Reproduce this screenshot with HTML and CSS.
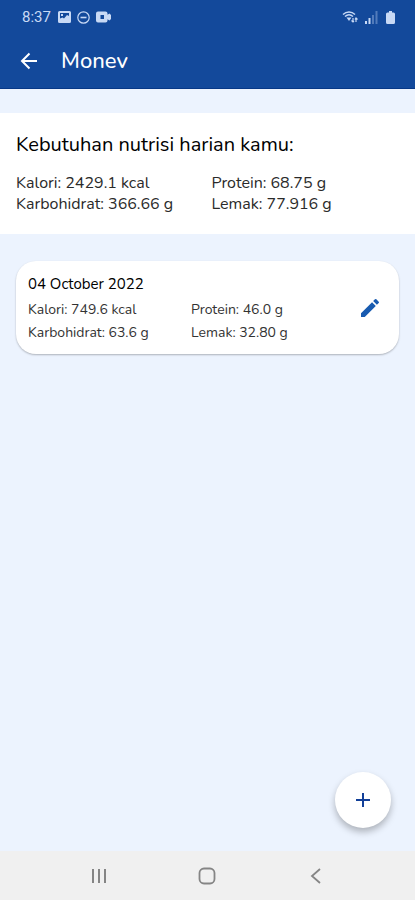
FILE: index.html
```html
<!DOCTYPE html>
<html lang="id">
<head>
<meta charset="utf-8">
<meta name="viewport" content="width=device-width, initial-scale=1">
<title>Monev</title>
<link rel="stylesheet" href="styles.css">
</head>
<body>
<header class="top">
  <div class="status">
    <time class="clock">8:37</time>
    <svg width="13" height="13" viewBox="0 0 13 13" aria-hidden="true"><path fill="currentColor" fill-rule="evenodd" d="M1.500 0h10A1.500 1.500 0 0 1 13 1.500v9a1.500 1.500 0 0 1-1.500 1.500h-10A1.500 1.500 0 0 1 0 10.500v-9A1.500 1.500 0 0 1 1.500 0zM2 2v8h9V2zM3 3h2v2H3zM2 10V7.500l2.500-1L6 7.500 9 4l2 1v5z"/></svg>
    <svg width="13" height="13" viewBox="0 0 13 13" fill="none" stroke="currentColor" aria-hidden="true"><circle cx="6.500" cy="6.500" r="5.700" stroke-width="1.200"/><path d="M3.500 6.500h6" stroke-width="1.600"/></svg>
    <svg width="16" height="12" viewBox="0 0 16 12" aria-hidden="true"><path fill="currentColor" fill-rule="evenodd" d="M2 .5h7.500a2 2 0 0 1 2 2v1.300L13.500 2.500 15 4v4l-1.500 1.500-2-1.300v1.300a2 2 0 0 1-2 2H2a2 2 0 0 1-2-2v-7a2 2 0 0 1 2-2zM4.500 4v4H8V4z"/></svg>
    <span class="spacer"></span>
    <svg width="17" height="14" viewBox="0 0 17 14" fill="none" stroke="currentColor" aria-hidden="true"><path stroke-width="1.500" d="M1 4.500C4.500 1.200 9.500 1.200 13 4.500M3 6.500c2.500-2.200 5.500-2.200 8 0"/><path fill="currentColor" stroke="none" d="M4.500 7.600h5L7 11z"/><path stroke-width="1.200" d="M11 8v4M9.500 10.500L11 12l1-1M14 12V8M13 9.500L14 8l1.500 1.500"/></svg>
    <svg width="13" height="13" viewBox="0 0 13 13" fill="currentColor" aria-hidden="true"><path d="M0 10h2v3H0zM3.500 7h2v6h-2z"/><path opacity=".35" d="M7 4h2v9H7zM10.500 0h2v13h-2z"/></svg>
    <svg class="battery" width="9" height="13" viewBox="0 0 9 13" fill="currentColor" aria-hidden="true"><path d="M3 0h3v1.500h1.500A1.500 1.500 0 0 1 9 3v8.500A1.500 1.500 0 0 1 7.500 13h-6A1.500 1.500 0 0 1 0 11.500V3a1.500 1.500 0 0 1 1.500-1.500H3z"/></svg>
  </div>
  <div class="appbar">
    <button class="icon-btn" type="button" aria-label="Kembali"><svg width="24" height="24" viewBox="0 0 24 24"><path fill="none" stroke="currentColor" stroke-width="2" d="M20 12H5.500M12.500 4.500L5 12l7.500 7.500"/></svg></button>
    <h1>Monev</h1>
  </div>
</header>
<main>
  <section class="needs">
    <h2>Kebutuhan nutrisi harian kamu:</h2>
    <div class="facts">
      <span>Kalori: 2429.1 kcal</span><span>Protein: 68.75 g</span>
      <span>Karbohidrat: 366.66 g</span><span>Lemak: 77.916 g</span>
    </div>
  </section>
  <article class="card">
    <div class="entry">
      <h3>04 October 2022</h3>
      <div class="facts">
        <span>Kalori: 749.6 kcal</span><span>Protein: 46.0 g</span>
        <span>Karbohidrat: 63.6 g</span><span>Lemak: 32.80 g</span>
      </div>
    </div>
    <button class="icon-btn edit" type="button" aria-label="Ubah"><svg width="24" height="24" viewBox="0 0 24 24" fill="currentColor"><path d="M3 17.250V21h3.750L17.810 9.940l-3.750-3.750L3 17.250zM20.710 7.040a1 1 0 0 0 0-1.410l-2.340-2.340a1 1 0 0 0-1.410 0l-1.830 1.830 3.750 3.750 1.830-1.830z"/></svg></button>
  </article>
</main>
<button class="fab" type="button" aria-label="Tambah"><svg width="24" height="24" viewBox="0 0 24 24"><path fill="none" stroke="currentColor" stroke-width="2" d="M12 5v14M5 12h14"/></svg></button>
<nav class="nav">
  <button type="button" aria-label="Terbaru"><svg width="20" height="20" viewBox="0 0 20 20"><path fill="none" stroke="currentColor" stroke-width="2" d="M4 3v14M10 3v14M16 3v14"/></svg></button>
  <button type="button" aria-label="Beranda"><svg width="20" height="20" viewBox="0 0 20 20"><rect x="2.500" y="2.500" width="15" height="15" rx="4.500" fill="none" stroke="currentColor" stroke-width="1.800"/></svg></button>
  <button type="button" aria-label="Kembali"><svg width="20" height="20" viewBox="0 0 20 20"><path fill="none" stroke="currentColor" stroke-width="1.800" d="M14 3l-8 7 8 7"/></svg></button>
</nav>
</body>
</html>
```
FILE: styles.css
```css
* { box-sizing: border-box; }
body {
  margin: 0;
  min-height: 100vh;
  display: flex;
  flex-direction: column;
  background: #ecf3fe;
  color: #2a2a2a;
  font-family: Nunito, "Open Sans", "Noto Sans", sans-serif;
}
h1, h2, h3 { margin: 0; font-weight: 400; }
svg { display: block; flex: none; }
button {
  border: 0;
  padding: 0;
  background: none;
  color: inherit;
  display: grid;
  place-items: center;
  cursor: pointer;
}
.top { background: #13499b; color: #fff; border-bottom: 1px solid #073887; }
.status {
  height: 34px;
  padding: 0 20px 0 22px;
  display: flex;
  align-items: center;
  gap: 6px;
  color: #c8d9f5;
}
.clock { font: 15px/20px Roboto, sans-serif; margin-right: 1px; }
.spacer { flex: 1; }
.battery { margin-left: 2px; }
.appbar { height: 54px; padding: 0 17px; display: flex; align-items: center; gap: 20px; }
.icon-btn { width: 24px; height: 24px; }
h1 { font-size: 22px; line-height: 28px; font-weight: 500; }
main { flex: 1; padding-top: 24px; }
.needs { background: #fff; padding: 19px 16px; }
h2 { font-size: 20px; line-height: 26px; color: #000; }
.facts { display: grid; grid-template-columns: 1fr 1fr; }
.needs .facts {
  margin-top: 15px;
  column-gap: 8px;
  font-size: 16px;
  line-height: 21px;
}
.card {
  margin: 27px 16px 0;
  padding: 11px 17px 10px 12px;
  display: flex;
  align-items: center;
  gap: 4px;
  background: #fff;
  border-radius: 20px;
  box-shadow: 0 1px 2px #0004;
}
.entry { flex: 1; }
h3 { font-size: 15px; line-height: 24px; color: #000; }
.card .facts {
  margin-top: 2px;
  font-size: 14px;
  line-height: 23px;
  color: #333;
}
.edit { color: #185bb0; }
.fab {
  position: fixed;
  right: 24px;
  bottom: 72px;
  width: 56px;
  height: 56px;
  border-radius: 50%;
  background: #fff;
  color: #123f98;
  box-shadow: 0 4px 7px #0004;
}
.nav {
  height: 49px;
  padding: 0 45px;
  display: flex;
  justify-content: space-around;
  align-items: center;
  background: #f0f0f0;
  color: #858585;
}
```
